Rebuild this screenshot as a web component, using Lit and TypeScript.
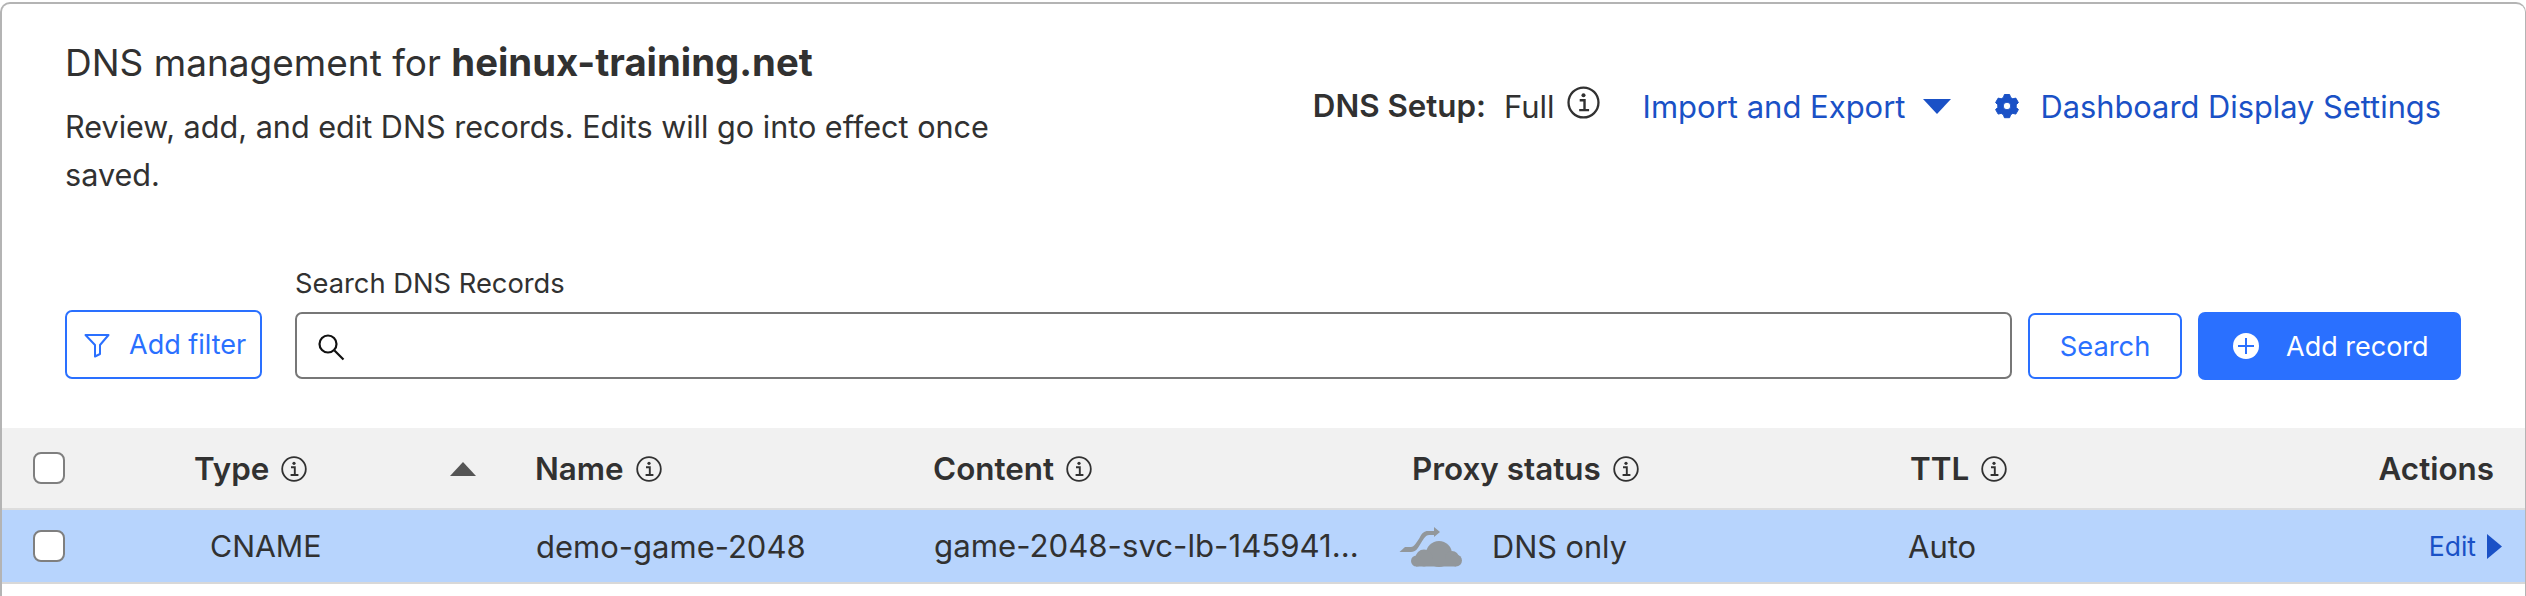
import { LitElement, html, css } from "lit";
import { customElement } from "lit/decorators.js";

const info = html`<svg class="info" viewBox="0 0 26 26" fill="none" stroke="currentColor">
  <circle cx="13" cy="13" r="11.8" stroke-width="1.8"/>
  <path d="M10 11.200h3.800v7.700M9.600 19h7.800" stroke-width="1.900"/>
  <circle cx="13" cy="7.300" r="1.600" fill="currentColor" stroke="none"/>
</svg>`;

@customElement("app-root")
export class AppRoot extends LitElement {
  static styles = css`
    :host { display: block; width: 2526px; height: 596px; background: #fff; font-family: Inter, "Liberation Sans", sans-serif; color: #313131; overflow: hidden; }
    .card { box-sizing: border-box; height: 594px; margin-top: 2px; border: 2px solid #b4b4b4; border-width: 2px 1px 0 2px; border-radius: 10px 10px 0 0; overflow: hidden; }
    .top { display: flex; justify-content: space-between; height: 264px; box-sizing: border-box; padding: 34px 84px 0 63px; }
    .title { font-size: 37px; line-height: 48px; font-weight: 400; margin: 0; }
    .title b { font-weight: 700; font-size: 38.300px; }
    .desc { font-size: 30.600px; line-height: 48px; margin: 16px 0 0; width: 960px; }
    .meta { display: flex; align-items: center; height: 50px; margin-top: 43px; font-size: 31px; }
    .setup { font-weight: 600; font-size: 31.300px; }
    .full { margin-left: 18px; }
    .info { width: 26px; height: 26px; flex: none; }
    .meta .info { width: 33px; height: 33px; margin: -8px 0 0 12px; }
    .link { color: #1a51c6; }
    .import { margin-left: 43px; }
    .caret { width: 28px; height: 15px; margin-left: 17px; fill: #1a51c6; }
    .gear { width: 26px; height: 26px; margin-left: 43px; margin-right: 21px; fill: #1a51c6; }
    .dash { font-size: 30.800px; }
    .toolbar { display: flex; align-items: flex-end; padding: 0 63px; margin-bottom: 48px; }
    .btn { box-sizing: border-box; display: flex; align-items: center; border: 2px solid #2a70ff; border-radius: 7px; color: #2a70ff; background: #fff; font-size: 27.300px; }
    .filter { width: 197px; height: 69px; margin-bottom: 1px; padding-left: 17px; gap: 19px; font-size: 27px; }
    .filter svg { width: 26px; height: 26px; }
    .field { width: 1717px; margin-left: 33px; }
    .field label { display: block; font-size: 27.300px; line-height: 32px; margin-bottom: 12px; }
    .input { box-sizing: border-box; height: 67px; border: 2px solid #777; border-radius: 7px; display: flex; align-items: center; padding-left: 19px; margin-bottom: 1px; }
    .input svg { width: 30px; height: 30px; margin-top: 2px; }
    .search { width: 154px; height: 66px; margin: 0 0 1px 16px; justify-content: center; }
    .add { box-sizing: border-box; width: 263px; height: 68px; margin-left: 16px; border-radius: 7px; background: #2a70ff; color: #fff; display: flex; align-items: center; padding-left: 35px; gap: 27px; font-size: 27px; }
    .add svg { width: 26px; height: 26px; }
    .grid { display: grid; grid-template-columns: 192px 341px 398px 479px 498px 1fr; align-items: center; }
    .head { height: 82px; box-sizing: border-box; padding-top: 2px; background: #f1f1f1; border-bottom: 2px solid #ddd; font-size: 31.400px; font-weight: 600; }
    .row { height: 74px; box-sizing: border-box; background: #b7d4fd; border-bottom: 2px solid #d8d8d8; font-size: 31px; }
    .cell { display: flex; align-items: center; gap: 12px; min-width: 0; white-space: nowrap; }
    .first { position: relative; }
    .check { box-sizing: border-box; position: absolute; left: 31px; top: -16px; width: 32px; height: 32px; border: 2px solid #7f7f7f; border-radius: 8px; background: #fff; }
    .head .check { top: -17px; }
    .sort { width: 26px; height: 14px; margin-left: 131px; fill: #555; }
    .pad { padding-left: 16px; font-size: 30.300px; }
    .nudge { padding-left: 1px; }
    .wide { padding-left: 1px; font-size: 31.200px; }
    .act { padding-right: 31px; }
    .spacer { flex: 1; }
    .last { padding-right: 23px; gap: 10px; }
    .auto { margin-left: -2px; }
    .edit { font-size: 26.500px; color: #1a51c6; margin-right: 1px; }
    .last svg { width: 15px; height: 25px; fill: #1a51c6; }
    .cloud { width: 80px; height: 50px; margin-left: -18px; margin-right: 6px; flex: none; fill: #92979b; }
    .only { font-size: 30.700px; }
  `;

  render() {
    return html`<div class="card">
      <div class="top">
        <div>
          <h1 class="title">DNS management for <b>heinux-training.net</b></h1>
          <p class="desc">Review, add, and edit DNS records. Edits will go into effect once saved.</p>
        </div>
        <div class="meta">
          <span class="setup">DNS Setup:</span><span class="full">Full</span>${info}
          <span class="link import">Import and Export</span>
          <svg class="caret" viewBox="0 0 28 15"><path d="M0 0h28L14 15z"/></svg>
          <svg class="gear" viewBox="0 0 26 26"><path fill-rule="evenodd" stroke="#1a51c6" stroke-width="1" stroke-linejoin="round" d="M10.400 1.500h5.200l1 3 2.200 1.300 3-.7 2.600 4.500-2.200 2.200v2.600l2.200 2.200-2.600 4.500-3-.7-2.200 1.300-1 3h-5.200l-1-3-2.200-1.300-3 .7-2.600-4.500 2.200-2.200v-2.600L1.600 9.600l2.600-4.500 3 .7 2.200-1.300zM13 9.200a3.800 3.800 0 1 0 0 7.600 3.800 3.800 0 0 0 0-7.600z"/></svg>
          <span class="link dash">Dashboard Display Settings</span>
        </div>
      </div>
      <div class="toolbar">
        <div class="btn filter">
          <svg viewBox="0 0 26 26" fill="none" stroke="currentColor" stroke-width="2"><path d="M1.500 3h23L16 13v9l-5 2.500V13z" stroke-linejoin="round"/></svg>
          <span>Add filter</span>
        </div>
        <div class="field">
          <label>Search DNS Records</label>
          <div class="input">
            <svg viewBox="0 0 30 30" fill="none" stroke="#111" stroke-width="2.200"><circle cx="12" cy="12" r="8.500"/><path d="M18.500 18.500l9 9"/></svg>
          </div>
        </div>
        <div class="btn search">Search</div>
        <div class="add">
          <svg viewBox="0 0 26 26"><circle cx="13" cy="13" r="13" fill="#fff"/><path d="M13 5v16M5 13h16" stroke="#2a70ff" stroke-width="2"/></svg>
          <span>Add record</span>
        </div>
      </div>
      <div class="grid head">
        <div class="cell first"><span class="check"></span></div>
        <div class="cell"><span>Type</span>${info}<svg class="sort" viewBox="0 0 26 14"><path d="M13 0l13 14H0z"/></svg></div>
        <div class="cell"><span>Name</span>${info}</div>
        <div class="cell"><span>Content</span>${info}</div>
        <div class="cell"><span>Proxy status</span>${info}</div>
        <div class="cell act"><span>TTL</span>${info}<span class="spacer"></span><span>Actions</span></div>
      </div>
      <div class="grid row">
        <div class="cell first"><span class="check"></span></div>
        <div class="cell pad">CNAME</div>
        <div class="cell nudge">demo-game-2048</div>
        <div class="cell wide">game-2048-svc-lb-145941...</div>
        <div class="cell">
          <svg class="cloud" viewBox="0 0 80 50">
            <path d="M5.500 31 11 26h6c3 0 6-5 8.500-9 2.500-5 4.500-7 8.500-7h6V6l6 5-6 5v-2h-5c-3 0-5 3-8 8-3 5-5 9-10 9z"/>
            <circle cx="45" cy="33" r="13"/><circle cx="30" cy="37" r="8.500"/><circle cx="22.500" cy="40" r="5.500"/><circle cx="58" cy="37" r="7"/><circle cx="62" cy="39.500" r="6"/>
            <rect x="22" y="38" width="40" height="7.500"/>
          </svg>
          <span class="only">DNS only</span>
        </div>
        <div class="cell last"><span class="auto">Auto</span><span class="spacer"></span><span class="edit">Edit</span><svg viewBox="0 0 15 25"><path d="M0 0l15 12.500L0 25z"/></svg></div>
      </div>
    </div>`;
  }
}
